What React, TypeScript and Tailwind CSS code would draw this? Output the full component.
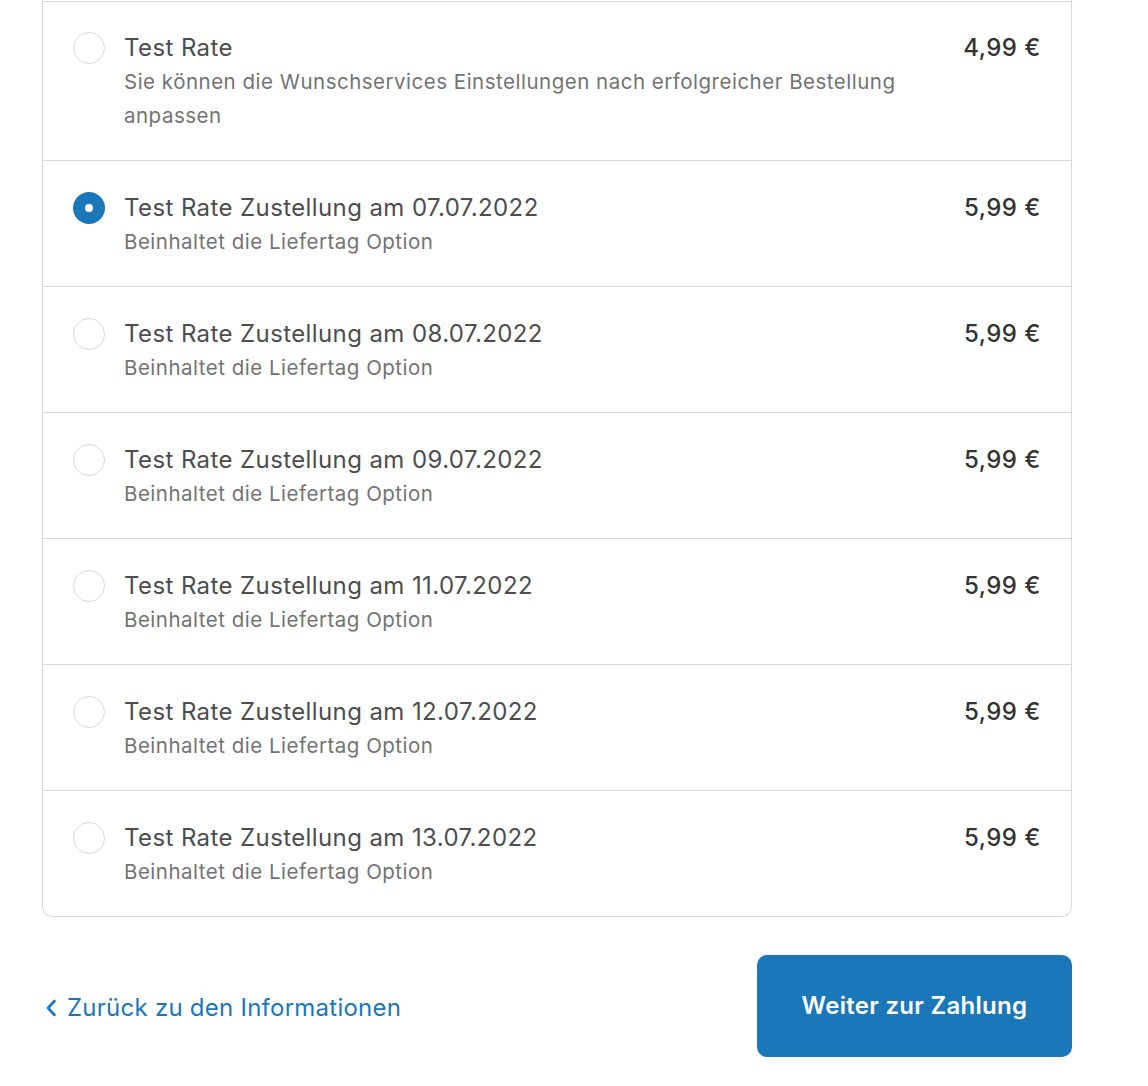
import * as React from 'react';

const RATES = [
  {
    title: 'Test Rate',
    desc: 'Sie können die Wunschservices Einstellungen nach erfolgreicher Bestellung anpassen',
    price: '4,99 €',
  },
  { title: 'Test Rate Zustellung am 07.07.2022', desc: 'Beinhaltet die Liefertag Option', price: '5,99 €' },
  { title: 'Test Rate Zustellung am 08.07.2022', desc: 'Beinhaltet die Liefertag Option', price: '5,99 €' },
  { title: 'Test Rate Zustellung am 09.07.2022', desc: 'Beinhaltet die Liefertag Option', price: '5,99 €' },
  { title: 'Test Rate Zustellung am 11.07.2022', desc: 'Beinhaltet die Liefertag Option', price: '5,99 €' },
  { title: 'Test Rate Zustellung am 12.07.2022', desc: 'Beinhaltet die Liefertag Option', price: '5,99 €' },
  { title: 'Test Rate Zustellung am 13.07.2022', desc: 'Beinhaltet die Liefertag Option', price: '5,99 €' },
];

function Radio({ checked }: { checked: boolean }) {
  if (checked) {
    return (
      <span className="mt-px flex h-[32px] w-[32px] shrink-0 items-center justify-center rounded-full bg-[#1a77b9]">
        <span className="h-[8px] w-[8px] rounded-full bg-white" />
      </span>
    );
  }
  return <span className="mt-px h-[32px] w-[32px] shrink-0 rounded-full border border-[#d9d9d9] bg-white" />;
}

export default function App() {
  const [selected, setSelected] = React.useState(1);

  return (
    <div className="min-h-[1086px] bg-white font-['Inter',sans-serif] antialiased">
      <div className="ml-[42px] w-[1030px]">
        <div className="rounded-b-[10px] border-x border-b border-[#d9d9d9] pt-px">
          {RATES.map((r, i) => (
            <label
              key={i}
              onClick={() => setSelected(i)}
              className="flex cursor-pointer items-start border-t border-[#d9d9d9] pt-[30px] pb-[27px] pl-[30px] pr-[30px] first:pt-[29px] first:pb-[27px]"
            >
              <Radio checked={selected === i} />
              <div className="ml-[19px] flex-1 pr-[40px]">
                <div className="text-[24px] leading-[34px] tracking-[0.4px] text-[#4d4d4d]">{r.title}</div>
                <div className="max-w-[800px] text-[20.5px] leading-[34px] tracking-[0.5px] text-[#737373]">
                  {r.desc}
                </div>
              </div>
              <span className="text-[24px] font-medium leading-[34px] tracking-[0.5px] text-[#333333]">{r.price}</span>
            </label>
          ))}
        </div>

        <div className="mt-[38px] flex items-center justify-between">
          <a href="#" className="ml-[3px] mt-[4px] flex items-center gap-[10px] text-[24px] tracking-[0.25px] text-[#1a77b9]">
            <svg width="12" height="18" viewBox="0 0 12 18" fill="none" aria-hidden="true">
              <path d="M9.5 2 L3 9 L9.5 16" stroke="currentColor" strokeWidth="2.6" strokeLinecap="round" strokeLinejoin="round" />
            </svg>
            Zurück zu den Informationen
          </a>
          <button
            type="button"
            className="h-[102px] w-[315px] rounded-[10px] bg-[#1a77b9] text-[24px] font-semibold tracking-[0.3px] text-white"
          >
            Weiter zur Zahlung
          </button>
        </div>
      </div>
    </div>
  );
}
